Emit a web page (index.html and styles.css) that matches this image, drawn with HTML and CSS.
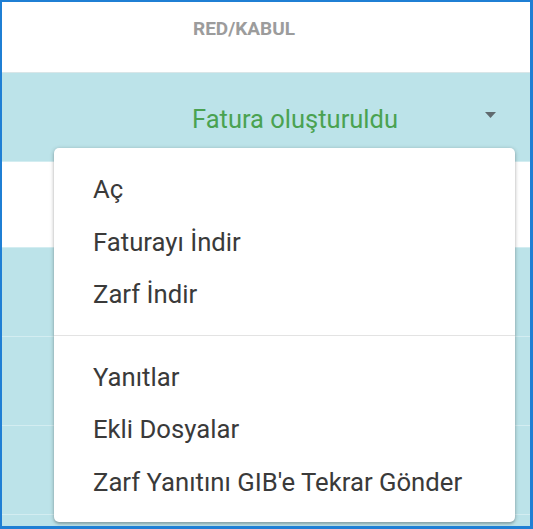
FILE: index.html
```html
<!DOCTYPE html>
<html lang="tr">
<head>
<meta charset="utf-8">
<title>Red/Kabul</title>
<link rel="stylesheet" href="styles.css">
</head>
<body>
<div class="frame">
  <div class="table">
    <div class="thead">RED/KABUL</div>
    <div class="row row-blue row-select">
      <span class="status">Fatura oluşturuldu</span>
      <svg class="caret" width="11" height="6" viewBox="0 0 11 6"><path d="M0 0 H11 L5.5 6 Z" fill="#5f6a6e"/></svg>
    </div>
    <div class="row row-white"></div>
    <div class="row row-blue"></div>
    <div class="row row-blue"></div>
    <div class="row row-blue"></div>
    <div class="row row-blue"></div>
  </div>
  <div class="menu">
    <div class="item">Aç</div>
    <div class="item">Faturayı İndir</div>
    <div class="item">Zarf İndir</div>
    <div class="divider"></div>
    <div class="item">Yanıtlar</div>
    <div class="item">Ekli Dosyalar</div>
    <div class="item">Zarf Yanıtını GIB'e Tekrar Gönder</div>
  </div>
</div>
</body>
</html>
```

FILE: styles.css
```css
* { box-sizing: border-box; }
html, body { margin: 0; padding: 0; }
body {
  width: 533px;
  height: 529px;
  overflow: hidden;
  font-family: Roboto, "Liberation Sans", sans-serif;
  background: #fff;
}
.frame {
  position: relative;
  width: 533px;
  height: 529px;
  border-style: solid;
  border-color: #1f7fd4;
  border-width: 2px 3px 3px 2px;
  overflow: hidden;
}
.table {
  display: flex;
  flex-direction: column;
}
.thead {
  height: 71px;
  padding: 17px 0 0 191px;
  font-size: 19px;
  line-height: 19px;
  font-weight: 700;
  color: #9c9c9c;
  background: #fff;
  border-bottom: 1px solid #d9e6e8;
}
.row {
  flex: none;
  height: 89px;
  border-bottom: 1px solid #d3edf1;
}
.row-blue { background: #bce3e9; }
.row-white { background: #fff; height: 86px; }
.row-select {
  display: flex;
  align-items: center;
  padding: 4px 34px 0 190px;
}
.status {
  font-size: 25.5px;
  line-height: 30px;
  color: #4aa251;
}
.caret {
  margin-left: auto;
  margin-bottom: 8px;
}
.menu {
  position: absolute;
  left: 52px;
  top: 146px;
  width: 461px;
  padding: 15px 0 14px;
  background: #fff;
  border-radius: 5px;
  box-shadow: 0 1px 4px rgba(0, 0, 0, 0.28), 0 2px 2px rgba(0, 0, 0, 0.12);
}
.item {
  height: 52.5px;
  line-height: 52px;
  padding-left: 39px;
  font-size: 25.7px;
  color: #3a3a3a;
  white-space: nowrap;
}
.divider {
  height: 1px;
  margin: 14px 0 15px;
  background: #e3e3e3;
}
```
